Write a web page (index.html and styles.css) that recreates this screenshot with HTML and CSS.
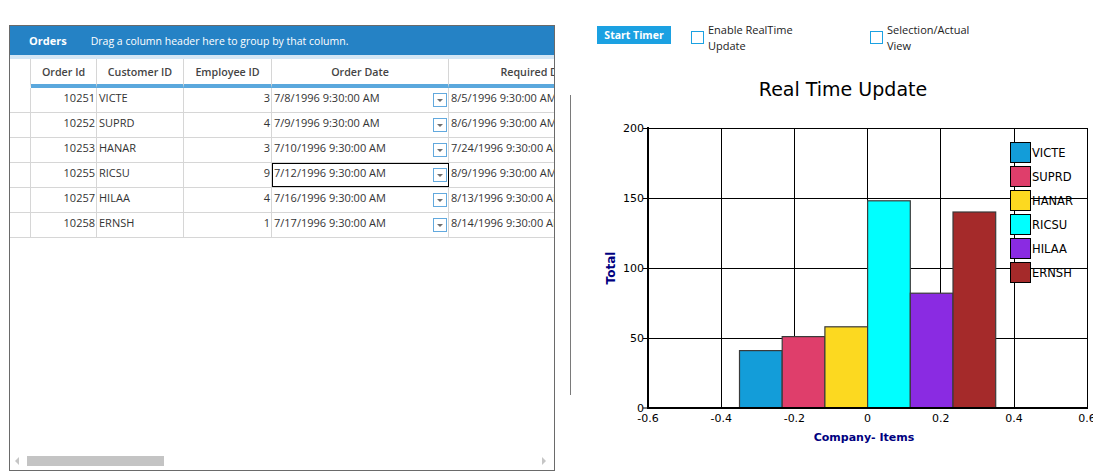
FILE: index.html
```html
<!DOCTYPE html>
<html>
<head>
<meta charset="utf-8">
<title>Orders - Real Time Update</title>
<link rel="stylesheet" href="styles.css">
</head>
<body>
<div class="page">
  <div class="grid">
    <div class="group-bar"><span class="grid-title">Orders</span><span class="group-hint">Drag a column header here to group by that column.</span></div>
    <div class="group-strip"></div>
    <div class="grid-body">
      <div class="row head">
        <div class="cell ind"></div>
        <div class="cell hc">Order Id</div>
        <div class="cell hc">Customer ID</div>
        <div class="cell hc">Employee ID</div>
        <div class="cell hc">Order Date</div>
        <div class="cell hc">Required Date</div>
      </div>
      <div class="row">
        <div class="cell ind"></div>
        <div class="cell num">10251</div>
        <div class="cell txt">VICTE</div>
        <div class="cell num">3</div>
        <div class="cell date"><span>7/8/1996 9:30:00 AM</span><span class="dd"></span></div>
        <div class="cell txt">8/5/1996 9:30:00 AM</div>
      </div>
      <div class="row">
        <div class="cell ind"></div>
        <div class="cell num">10252</div>
        <div class="cell txt">SUPRD</div>
        <div class="cell num">4</div>
        <div class="cell date"><span>7/9/1996 9:30:00 AM</span><span class="dd"></span></div>
        <div class="cell txt">8/6/1996 9:30:00 AM</div>
      </div>
      <div class="row">
        <div class="cell ind"></div>
        <div class="cell num">10253</div>
        <div class="cell txt">HANAR</div>
        <div class="cell num">3</div>
        <div class="cell date"><span>7/10/1996 9:30:00 AM</span><span class="dd"></span></div>
        <div class="cell txt">7/24/1996 9:30:00 AM</div>
      </div>
      <div class="row">
        <div class="cell ind"></div>
        <div class="cell num">10255</div>
        <div class="cell txt">RICSU</div>
        <div class="cell num">9</div>
        <div class="cell date sel"><span>7/12/1996 9:30:00 AM</span><span class="dd"></span></div>
        <div class="cell txt">8/9/1996 9:30:00 AM</div>
      </div>
      <div class="row">
        <div class="cell ind"></div>
        <div class="cell num">10257</div>
        <div class="cell txt">HILAA</div>
        <div class="cell num">4</div>
        <div class="cell date"><span>7/16/1996 9:30:00 AM</span><span class="dd"></span></div>
        <div class="cell txt">8/13/1996 9:30:00 AM</div>
      </div>
      <div class="row">
        <div class="cell ind"></div>
        <div class="cell num">10258</div>
        <div class="cell txt">ERNSH</div>
        <div class="cell num">1</div>
        <div class="cell date"><span>7/17/1996 9:30:00 AM</span><span class="dd"></span></div>
        <div class="cell txt">8/14/1996 9:30:00 AM</div>
      </div>
    </div>
    <div class="hscroll">
      <span class="arrow-left"></span>
      <span class="thumb"></span>
      <span class="arrow-right"></span>
    </div>
  </div>

  <div class="splitter"></div>

  <div class="panel">
    <div class="controls">
      <button class="start-btn">Start Timer</button>
      <label class="check check-first"><span class="box"></span><span class="check-label">Enable RealTime Update</span></label>
      <label class="check"><span class="box"></span><span class="check-label">Selection/Actual View</span></label>
    </div>
    <svg class="chart" width="503" height="400" viewBox="590 60 503 400" xmlns="http://www.w3.org/2000/svg">
      <text class="c-title" x="843" y="96" text-anchor="middle">Real Time Update</text>
      <rect x="648" y="128" width="439" height="280" fill="#fff"/>
      <path d="M721.5 128V408M794.5 128V408M867.5 128V408M940.5 128V408M1014.5 128V408M1087.5 128V408M648 128.5H1088M648 198.5H1088M648 268.5H1088M648 338.5H1088" stroke="#000" stroke-width="1" fill="none"/>
      <path d="M643 128.5H648M643 198.5H648M643 268.5H648M643 338.5H648M643 408H648" stroke="#000" stroke-width="1" fill="none"/>
      <g stroke="#3a3a3a" stroke-width="1.2">
        <rect x="739.5" y="350.6" width="42.7" height="57.4" fill="#139dd9"/>
        <rect x="782.2" y="336.6" width="42.7" height="71.4" fill="#df3e6b"/>
        <rect x="824.9" y="326.8" width="42.7" height="81.2" fill="#fcd920"/>
        <rect x="867.6" y="200.8" width="42.7" height="207.2" fill="#00ffff"/>
        <rect x="910.3" y="293.2" width="42.7" height="114.8" fill="#8a2be2"/>
        <rect x="953.0" y="212.0" width="42.7" height="196.0" fill="#a52a2a"/>
      </g>
      <path d="M648 127V409M647 408H1088" stroke="#000" stroke-width="2" fill="none"/>
      <g class="c-tick" text-anchor="end">
        <text x="644" y="132">200</text>
        <text x="644" y="202">150</text>
        <text x="644" y="272">100</text>
        <text x="644" y="342">50</text>
        <text x="644" y="412">0</text>
      </g>
      <g class="c-tick" text-anchor="middle">
        <text x="648" y="422">-0.6</text>
        <text x="721.2" y="422">-0.4</text>
        <text x="794.4" y="422">-0.2</text>
        <text x="867.6" y="422">0</text>
        <text x="940.8" y="422">0.2</text>
        <text x="1014" y="422">0.4</text>
        <text x="1087" y="422">0.6</text>
      </g>
      <g stroke="#000" stroke-width="1">
        <rect x="1010.5" y="142.5" width="20" height="20" fill="#139dd9"/>
        <rect x="1010.5" y="166.5" width="20" height="20" fill="#df3e6b"/>
        <rect x="1010.5" y="190.5" width="20" height="20" fill="#fcd920"/>
        <rect x="1010.5" y="214.5" width="20" height="20" fill="#00ffff"/>
        <rect x="1010.5" y="238.5" width="20" height="20" fill="#8a2be2"/>
        <rect x="1010.5" y="262.5" width="20" height="20" fill="#a52a2a"/>
      </g>
      <g class="c-legend">
        <text x="1032" y="157">VICTE</text>
        <text x="1032" y="181">SUPRD</text>
        <text x="1032" y="205">HANAR</text>
        <text x="1032" y="229">RICSU</text>
        <text x="1032" y="253">HILAA</text>
        <text x="1032" y="277">ERNSH</text>
      </g>
      <text class="c-axis c-axis-y" transform="translate(615 268) rotate(-90)" text-anchor="middle">Total</text>
      <text class="c-axis" x="864" y="441" text-anchor="middle">Company- Items</text>
    </svg>
  </div>
</div>
</body>
</html>
```

FILE: styles.css
```css
html, body {
  margin: 0;
  padding: 0;
  background: #fff;
}

body {
  overflow: hidden;
  font-family: "Open Sans", "Noto Sans", sans-serif;
  font-size: 11px;
  color: #333;
}

.page {
  display: flex;
  align-items: flex-start;
  width: 1093px;
  height: 475px;
}

/* ---------- grid ---------- */
.grid {
  box-sizing: border-box;
  width: 546px;
  height: 446px;
  margin: 25px 0 0 9px;
  border: 1px solid #6a6a6a;
  display: flex;
  flex-direction: column;
  overflow: hidden;
  flex-shrink: 0;
}

.group-bar {
  height: 29px;
  background: #2582c5;
  color: #fff;
  display: flex;
  align-items: center;
  padding-left: 19px;
  gap: 24px;
  white-space: nowrap;
  font-size: 10.5px;
}

.grid-title {
  font-weight: 700;
  font-size: 11px;
}

.group-strip {
  height: 4px;
  background: #d3e6f5;
}

.grid-body {
  overflow: hidden;
}

.row {
  display: grid;
  grid-template-columns: 21px 66px 87px 88px 177px 178px;
  height: 25px;
  box-sizing: border-box;
  border-bottom: 1px solid #d6d6d6;
  width: 617px;
}

.row.head {
  height: 29px;
  border-bottom: none;
}

.cell {
  box-sizing: border-box;
  border-right: 1px solid #d6d6d6;
  line-height: 19px;
  white-space: nowrap;
  overflow: hidden;
}

.head .cell {
  height: 29px;
  line-height: 26px;
  border-bottom: 4px solid #5ba8dd;
  text-align: center;
  font-weight: 600;
  font-size: 10.7px;
  color: #444;
}

.head .cell.ind {
  border-bottom: 4px solid #fff;
}

.num {
  text-align: right;
  padding-right: 1px;
}

.txt {
  padding-left: 2px;
}

.date {
  display: flex;
  align-items: flex-start;
  justify-content: space-between;
  padding: 0 1px 0 2px;
}

.sel {
  outline: 1px solid #000;
  outline-offset: -1px;
}

.dd {
  box-sizing: border-box;
  width: 14px;
  height: 14px;
  margin-top: 5px;
  border: 1px solid #62a9de;
  display: flex;
  align-items: center;
  justify-content: center;
  flex-shrink: 0;
}

.dd::after {
  content: "";
  width: 0;
  height: 0;
  border-left: 3px solid transparent;
  border-right: 3px solid transparent;
  border-top: 3px solid #6d6d6d;
}

.hscroll {
  margin-top: auto;
  margin-bottom: 2px;
  height: 14px;
  display: flex;
  align-items: center;
  padding-left: 5px;
}

.arrow-left {
  width: 0;
  height: 0;
  border-top: 4px solid transparent;
  border-bottom: 4px solid transparent;
  border-right: 4px solid #c6c6c6;
}

.thumb {
  width: 137px;
  height: 10px;
  margin-left: 8px;
  background: #c4c4c4;
}

.arrow-right {
  width: 0;
  height: 0;
  margin-left: auto;
  margin-right: 8px;
  border-top: 4px solid transparent;
  border-bottom: 4px solid transparent;
  border-left: 4px solid #c6c6c6;
}

/* ---------- splitter ---------- */
.splitter {
  width: 1px;
  height: 300px;
  margin: 95px 0 0 15px;
  background: #7a7a7a;
  flex-shrink: 0;
}

/* ---------- right panel ---------- */
.panel {
  margin-left: 9px;
  width: 513px;
  flex-shrink: 0;
  display: flex;
  flex-direction: column;
}

.controls {
  display: flex;
  align-items: flex-start;
  padding-top: 22px;
  height: 32px;
}

.start-btn {
  margin: 4px 0 0 17px;
  width: 74px;
  height: 18px;
  padding: 0;
  border: none;
  background: #1ba1e2;
  color: #fff;
  font-family: "Open Sans", "Noto Sans", sans-serif;
  font-size: 10.5px;
  font-weight: 700;
  line-height: 18px;
}

.check {
  display: flex;
  align-items: flex-start;
  gap: 4px;
  width: 179px;
  color: #222;
  line-height: 16px;
}

.check-first {
  margin-left: 20px;
}

.box {
  box-sizing: border-box;
  width: 13px;
  height: 13px;
  margin-top: 9px;
  border: 1px solid #1ba1e2;
  background: #fff;
  flex-shrink: 0;
}

.check-label {
  width: 100px;
}

.chart {
  display: block;
  margin: 6px 0 0 10px;
  overflow: hidden;
}

.c-title {
  font-family: "DejaVu Sans", Verdana, sans-serif;
  font-size: 19px;
  fill: #000;
}

.c-tick {
  font-family: "DejaVu Sans", Verdana, sans-serif;
  font-size: 11px;
  fill: #000;
}

.c-legend {
  font-family: "DejaVu Sans", Verdana, sans-serif;
  font-size: 11.5px;
  fill: #000;
}

.c-axis {
  font-family: "DejaVu Sans", Verdana, sans-serif;
  font-size: 11px;
  font-weight: 700;
  fill: #000080;
}

.c-axis-y {
  font-size: 12px;
}
```
